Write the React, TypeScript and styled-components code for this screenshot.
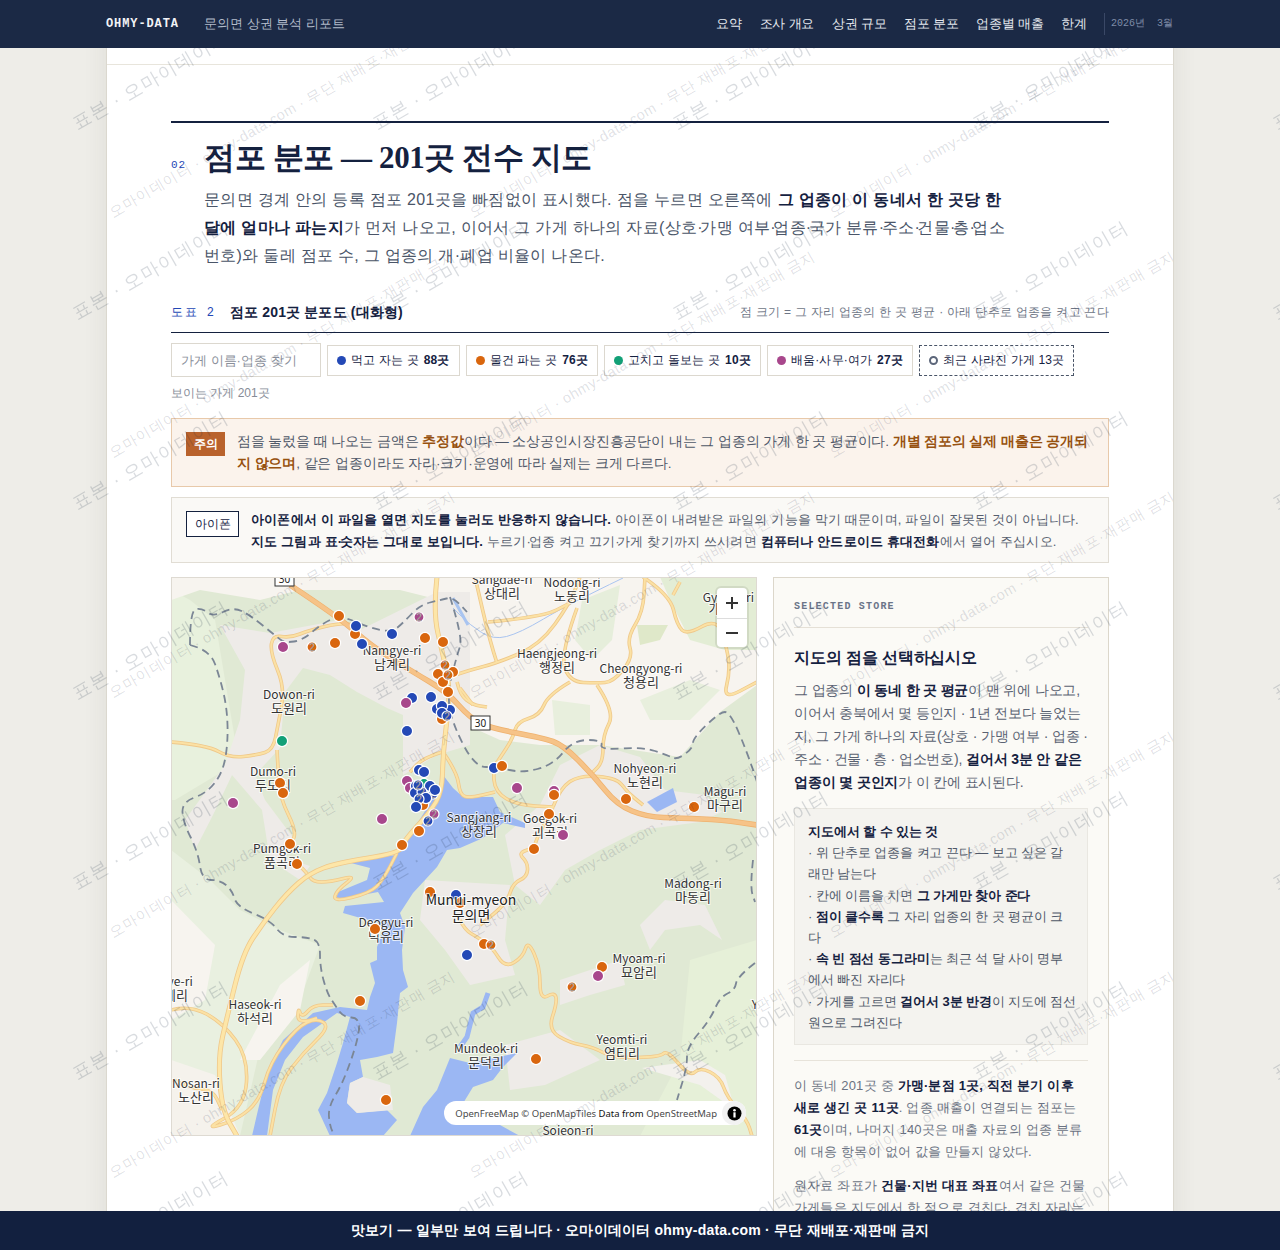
import React from 'react';
import styled, { createGlobalStyle } from 'styled-components';

const SANS = '"Noto Sans CJK KR", "Noto Sans", sans-serif';
const BODY = '"Liberation Sans", sans-serif';
const SERIF = '"Liberation Serif", serif';
const MONO = '"Liberation Mono", monospace';
const NAVY = '#14213f';

const Global = createGlobalStyle`
  html, body { margin: 0; height: 100%; overflow: hidden; background: #eeede8; }
  body { font-family: ${BODY}; color: #4a5568; }
  * { box-sizing: border-box; }
`;

const TopBar = styled.header`
  position: fixed; top: 0; left: 0; right: 0; height: 48px; z-index: 10;
  background: #1b2945; display: flex; align-items: center; padding: 0 107px 0 106px;
`;
const Brand = styled.div`
  font: 700 12px ${MONO}; letter-spacing: .9px; color: #f2f3f6; margin-right: 25px;
`;
const ReportName = styled.div`font-size: 13px; color: #b3bccb;`;
const Nav = styled.nav`margin-left: auto; display: flex; align-items: center; gap: 17.5px;`;
const NavLink = styled.a`font-size: 13px; letter-spacing: -.2px; color: #e6e9f0;`;
const DateTag = styled.div`
  border-left: 1px solid #3a4866; height: 22px; padding-left: 6px;
  font: 400 10px/22px ${MONO}; color: #7f8ca8; white-space: pre;
`;
const BottomBar = styled.footer`
  position: fixed; bottom: 0; left: 0; right: 0; height: 39px; z-index: 10;
  background: #12203f; color: #fff; font-size: 14px; font-weight: 700; letter-spacing: .22px;
  display: flex; align-items: center; justify-content: center;
`;

const Sheet = styled.main`
  position: relative; width: 1066px; height: 100vh; margin: 0 auto; overflow: hidden;
  background: #fff; box-shadow: 0 0 24px rgba(60,55,40,.09), 0 0 0 1px #e3e0d8;
`;
const PrevEnd = styled.div`height: 65px; border-bottom: 1px solid #e8e5dc;`;
const Section = styled.section`padding: 56px 64px 0;`;
const HeadRule = styled.div`height: 2px; background: ${NAVY};`;
const TitleRow = styled.div`display: flex; align-items: baseline; margin-top: 13px;`;
const SecNo = styled.span`
  font: 400 11px ${MONO}; letter-spacing: 1px; color: #2347b5; width: 33px;
`;
const Title = styled.h2`
  margin: 0; font: 700 31px/44px ${SERIF}; color: ${NAVY}; letter-spacing: -.4px;
`;
const Lead = styled.p`
  margin: 6px 0 0 33px; width: 806px; font-size: 16px; line-height: 28px; letter-spacing: .3px; color: #4a5568;
  strong { color: ${NAVY}; font-weight: 700; }
`;
const Mid = styled.span`letter-spacing: -2.3px;`;
const FigHead = styled.div`
  margin-top: 29px; display: flex; align-items: center;
  border-bottom: 1px solid ${NAVY}; padding-bottom: 6px; height: 34px;
`;
const FigNo = styled.span`
  font: 400 12px ${MONO}; letter-spacing: 1.5px; color: #2347b5; width: 59px; white-space: pre;
`;
const FigTitle = styled.span`font-size: 14px; font-weight: 700; letter-spacing: .15px; color: ${NAVY};`;
const FigNote = styled.span`margin-left: auto; font-size: 12px; letter-spacing: .28px; color: #6e7686;`;
const Filters = styled.div`display: flex; align-items: center; gap: 6px; margin-top: 10px;`;
const Search = styled.input`
  width: 150px; height: 34px; border: 1px solid #dcd8cf; background: #fff; padding: 0 9px;
  font: 400 13px ${BODY}; outline: 0;
  &::placeholder { color: #8a8f9a; }
`;
const Chip = styled.button<{ $dashed?: boolean }>`
  height: 31px; padding: 0 9px; background: #fff; display: flex; align-items: center; gap: 5px;
  border: 1px ${p => (p.$dashed ? 'dashed #4a5568' : 'solid #dcd8cf')};
  font: 400 12px ${BODY}; letter-spacing: .15px; color: ${NAVY}; white-space: nowrap;
  b { font-weight: 700; }
`;
const Dot = styled.i<{ $c?: string }>`
  width: 9px; height: 9px; border-radius: 50%;
  ${p => (p.$c ? `background:${p.$c};` : 'border: 2px solid #5c667a;')}
`;
const Count = styled.div`margin-top: 7px; font-size: 12px; line-height: 18px; color: #868c97;`;
const Warn = styled.div`
  margin-top: 16px; height: 69px; padding: 13px 14px; display: flex; gap: 12px;
  background: #fbf3ec; border: 1px solid #e8c9aa;
`;
const WarnBadge = styled.span`
  flex: none; width: 39px; height: 24px; background: #b9622c; color: #fff;
  font-size: 12px; font-weight: 700; text-align: center; line-height: 24px;
`;
const WarnText = styled.p`
  margin: -1px 0 0; font-size: 13.5px; line-height: 22px; letter-spacing: -.1px; color: #4f5868;
  em { font-style: normal; font-weight: 700; color: #97510f; }
`;
const Note = styled.div`
  margin-top: 10px; height: 66px; padding: 13px 14px; display: flex; gap: 12px;
  background: #faf9f6; border: 1px solid #e1ddd4;
`;
const NoteBadge = styled.span`
  flex: none; width: 53px; height: 26px; border: 1px solid ${NAVY}; color: ${NAVY}; background: #fff;
  font-size: 12px; text-align: center; line-height: 24px;
`;
const NoteText = styled.p`
  margin: -2px 0 0; font-size: 13px; line-height: 22px; letter-spacing: .19px; color: #565e6e;
  strong { color: ${NAVY}; font-weight: 700; }
`;
const Columns = styled.div`display: grid; grid-template-columns: 586px 336px; gap: 16px; margin-top: 14px; align-items: start;`;
const MapFrame = styled.div`
  position: relative; height: 559px; overflow: hidden; border: 1px solid #dedad2; background: #e0e9d4;
`;
const MapSvg = styled.svg`position: absolute; left: -1px; top: -1px; width: 586px; height: 559px; display: block;`;
const Zoom = styled.div`
  position: absolute; top: 10px; right: 9px; width: 30px; height: 59px; background: #fff; border-radius: 4px;
  box-shadow: 0 0 0 2px rgba(0,0,0,.08); display: grid; grid-template-rows: 1fr 1fr;
`;
const ZoomBtn = styled.div`
  display: flex; align-items: center; justify-content: center;
  & + & { border-top: 1px solid #ddd; }
`;
const Attrib = styled.div`
  position: absolute; right: 10px; bottom: 10px; height: 24px; padding-left: 11px; border-radius: 12px;
  background: #fff; display: flex; align-items: center; gap: 5px;
  font: 400 9.5px "Noto Sans", sans-serif; color: #4a4a4a;
  b { font-weight: 400; color: #111; }
`;
const InfoBtn = styled.span`
  width: 24px; height: 24px; border-radius: 50%; background: #f2f2f2; display: flex; align-items: center; justify-content: center;
`;
const Aside = styled.aside`
  height: 900px; padding: 20px; background: #fbfaf6; border: 1px solid #dcd7cb; font-size: 14px;
  strong { color: ${NAVY}; font-weight: 700; }
`;
const AsideTag = styled.div`
  font: 700 10px/17px ${MONO}; letter-spacing: 1.2px; color: #6a7488; height: 30px;
  border-bottom: 1px solid #e5e0d6; white-space: pre;
`;
const AsideTitle = styled.h3`margin: 18px 0 0; font-size: 16px; line-height: 24px; letter-spacing: -.15px; font-weight: 700; color: ${NAVY};`;
const AsidePara = styled.p`margin: 9px 0 0; line-height: 23px; letter-spacing: -.18px; color: #5a6272;`;
const Tips = styled.div`
  margin-top: 14px; padding: 12px 14px 11px 13px; background: #f4f3ef; border: 1px solid #e9e7e1; font-size: 13px; line-height: 21.2px; letter-spacing: -.1px; color: #4f5868;
`;
const TipTitle = styled.div`font-weight: 700; color: ${NAVY};`;
const Keep = styled.span`white-space: nowrap;`;
const AsideFoot = styled.div`
  margin-top: 15px; padding-top: 14px; border-top: 1px solid #e7e3da; font-size: 13px; line-height: 22px; letter-spacing: .2px; color: #6a7282;
  p { margin: 0 0 12px; }
`;

const Layer = styled.div<{ $cols: number; $w: number; $h: number }>`
  pointer-events: none; display: grid; z-index: 5; overflow: visible;
  grid-template-columns: repeat(${p => p.$cols}, ${p => p.$w}px); grid-auto-rows: ${p => p.$h}px;
`;
const PageMarks = styled(Layer)`position: fixed; left: -220px; top: -79px;`;
const SheetMarks = styled(Layer)`position: absolute; left: 8px; top: -38px;`;
const BigMark = styled.span`
  height: 24px; width: max-content; line-height: 24px; font-size: 18.5px; letter-spacing: .8px; color: rgba(26,39,68,.17);
  white-space: pre; transform: rotate(-30deg); transform-origin: 0 100%;
`;
const SmallMark = styled.span`
  height: 20px; width: max-content; line-height: 20px; font-size: 14.5px; letter-spacing: .5px; color: rgba(26,39,68,.15);
  white-space: pre; transform: rotate(-30deg); transform-origin: 0 100%;
`;

type P = [number, number];
const smooth = (p: P[]) => {
  let d = `M${p[0][0]} ${p[0][1]}`;
  for (let i = 1; i < p.length - 1; i++) {
    const mx = (p[i][0] + p[i + 1][0]) / 2, my = (p[i][1] + p[i + 1][1]) / 2;
    d += ` Q${p[i][0]} ${p[i][1]} ${mx} ${my}`;
  }
  const l = p[p.length - 1];
  return d + ` L${l[0]} ${l[1]}`;
};

const BLUE = '#2449b6', ORANGE = '#d9660e', GREEN = '#12a077', MAG = '#a8478c';
const WATER = '#9bb7f3';

const minorRoads: P[][] = [
  [[171, 742], [207, 745], [230, 758], [257, 755], [273, 750], [278, 725], [285, 688], [270, 652], [273, 635], [290, 638], [310, 630], [340, 623], [355, 625]],
  [[277, 750], [278, 768], [280, 798], [297, 832], [290, 845]],
  [[297, 863], [307, 873], [313, 882], [330, 882], [357, 875], [337, 890], [333, 902], [370, 893], [383, 880], [397, 853]],
  [[442, 752], [423, 758], [410, 772]],
  [[443, 752], [457, 772], [460, 795], [470, 798], [495, 792]],
  [[455, 675], [470, 670], [497, 663], [540, 645], [570, 603], [580, 577]],
  [[457, 682], [460, 695], [473, 705], [487, 707]],
  [[497, 663], [490, 642], [475, 577]],
  [[488, 622], [543, 617], [570, 603]],
  [[577, 608], [560, 655], [570, 682], [597, 683], [613, 682], [633, 658], [627, 638], [643, 612], [645, 577]],
  [[570, 682], [548, 695], [540, 715], [517, 722], [513, 738], [500, 758], [493, 768], [495, 792], [517, 805], [553, 807]],
  [[597, 685], [615, 712], [603, 735], [603, 762], [592, 773]],
  [[553, 807], [560, 788], [580, 775], [617, 778], [627, 792], [643, 805]],
  [[553, 807], [549, 815], [537, 838], [534, 848], [518, 853], [528, 863], [527, 877], [513, 883], [507, 903], [480, 925]],
  [[460, 920], [465, 930], [477, 937], [492, 947], [505, 968], [523, 957], [528, 940], [540, 967], [540, 1000], [555, 992], [557, 1003], [548, 1030], [570, 1043], [593, 1047], [613, 1058], [660, 1057], [667, 1050], [690, 1077], [700, 1067], [720, 1077], [727, 1097], [747, 1120], [752, 1136]],
  [[643, 577], [670, 595], [677, 625], [687, 635], [717, 618], [727, 648], [730, 672], [723, 700], [757, 682]],
  [[680, 582], [673, 595]],
  [[171, 1010], [190, 1005], [223, 1023], [248, 1057], [245, 1107], [203, 1130], [237, 1120], [260, 1100], [270, 1063], [297, 1027], [317, 1018], [330, 1027], [303, 1053], [280, 1083], [270, 1136]],
  [[317, 1018], [298, 1025], [298, 1007], [302, 1018], [313, 1005], [333, 1005]],
  [[173, 1080], [190, 1088], [213, 1090], [222, 1110]],
  [[460, 688], [473, 705]],
];
const mainRoad: P[] = [[437, 577], [433, 612], [443, 655], [450, 688], [447, 720], [443, 755], [442, 792], [430, 812], [403, 842], [400, 853], [337, 863], [310, 873], [287, 893], [263, 923], [243, 953], [227, 1017], [218, 1057], [222, 1110], [237, 1136]];
const highway: P[] = [[290, 585], [340, 618], [370, 645], [413, 672], [447, 692], [470, 718], [490, 728], [543, 738], [563, 745], [593, 775], [617, 805], [647, 817], [680, 818], [723, 820], [757, 825]];
const borders: P[][] = [
  [[190, 645], [190, 610], [202, 608], [213, 617], [233, 607], [250, 615], [277, 637], [285, 643], [303, 640], [320, 625], [340, 615], [370, 628], [392, 632], [403, 623], [420, 605], [440, 600], [453, 597], [467, 612]],
  [[190, 645], [210, 650], [220, 678], [227, 708], [228, 742], [223, 772], [207, 793], [182, 802], [183, 822], [198, 852], [202, 880], [220, 880], [232, 890], [237, 907], [270, 920], [283, 937], [307, 937], [320, 942], [320, 967], [327, 993], [335, 1005], [343, 1017], [360, 1018], [358, 1040], [343, 1083], [328, 1107], [330, 1127], [335, 1136]],
  [[450, 597], [463, 638], [457, 655], [447, 695], [453, 725], [475, 767], [497, 767], [522, 773], [553, 765], [573, 740], [603, 740], [600, 750], [643, 747], [667, 755], [677, 760], [693, 748], [693, 738], [720, 712], [730, 712], [747, 752], [757, 782]],
  [[755, 963], [737, 977], [735, 990], [720, 997], [710, 1020], [687, 1047], [687, 1067], [677, 1100]],
  [[753, 860], [750, 887], [755, 902]],
];
const labels: [string, string, number, number][] = [
  ['Sangdae-ri', '상대리', 502, 584], ['Nodong-ri', '노동리', 572, 587], ['Namgye-ri', '남계리', 392, 655],
  ['Haengjeong-ri', '행정리', 557, 658], ['Cheongyong-ri', '청용리', 641, 673], ['Dowon-ri', '도원리', 289, 699],
  ['Dumo-ri', '두모리', 273, 776], ['Nohyeon-ri', '노현리', 645, 773], ['Magu-ri', '마구리', 725, 796],
  ['Sangjang-ri', '상장리', 479, 822], ['Goegok-ri', '괴곡리', 550, 823], ['Pumgok-ri', '품곡리', 282, 853],
  ['Madong-ri', '마동리', 693, 888], ['Deogyu-ri', '덕유리', 386, 927], ['Myoam-ri', '묘암리', 639, 963],
  ['Haseok-ri', '하석리', 255, 1009], ['Yeomti-ri', '염티리', 622, 1044], ['Mundeok-ri', '문덕리', 486, 1053],
  ['Nosan-ri', '노산리', 196, 1088], ['Gye-ri', '계리', 176, 986],
];
type M = [number, number, string, number?];
const markers: M[] = [
  [339, 616, ORANGE], [355, 634, ORANGE], [356, 626, BLUE], [392, 634, BLUE], [362, 644, BLUE], [335, 643, ORANGE], [312, 647, ORANGE, 2], [283, 647, MAG], [419, 617, MAG, 2], [425, 638, ORANGE], [443, 642, ORANGE],
  [438, 674, ORANGE], [453, 672, ORANGE], [443, 682, ORANGE], [448, 692, ORANGE], [445, 665, ORANGE, 2], [448, 675, ORANGE, 2], [431, 697, BLUE], [412, 698, BLUE], [406, 703, MAG], [442, 719, ORANGE], [437, 709, BLUE], [450, 710, BLUE], [442, 706, BLUE], [442, 713, BLUE], [447, 716, BLUE, 2], [407, 731, BLUE],
  [407, 781, MAG], [410, 788, MAG], [419, 770, BLUE], [424, 772, BLUE], [423, 805, ORANGE], [424, 784, GREEN], [416, 786, BLUE], [430, 786, BLUE], [415, 793, BLUE], [433, 794, BLUE, 2], [422, 792, BLUE, 2], [418, 785, BLUE, 2], [426, 798, BLUE], [419, 799, BLUE, 2], [435, 790, BLUE], [416, 807, BLUE], [434, 814, MAG, 2], [428, 821, BLUE, 2], [419, 831, ORANGE], [402, 845, ORANGE],
  [282, 741, GREEN], [233, 803, MAG], [382, 819, MAG], [280, 783, ORANGE], [283, 793, ORANGE], [290, 844, ORANGE], [297, 864, ORANGE], [430, 892, ORANGE], [456, 895, BLUE], [460, 903, ORANGE], [375, 929, ORANGE], [467, 955, BLUE], [360, 1001, ORANGE], [386, 1100, ORANGE],
  [484, 944, ORANGE], [491, 945, ORANGE, 2], [602, 967, ORANGE], [598, 976, MAG], [572, 987, ORANGE, 2], [536, 1059, ORANGE],
  [494, 768, BLUE], [502, 766, ORANGE], [517, 788, MAG], [554, 791, MAG], [554, 795, ORANGE], [549, 814, ORANGE], [563, 835, MAG], [534, 849, ORANGE], [626, 799, ORANGE], [694, 807, ORANGE],
];

const roadOut = '#efc88a', roadIn = '#fbe1a4';

const MapArt = () => (
  <MapSvg viewBox="171 577 586 559" aria-label="map">
    <rect x="171" y="577" width="586" height="559" fill="#e0e9d4" />
    <polygon fill="#e8f1dd" points="171,590 190,600 215,620 225,680 235,740 225,770 175,800 171,800" />
    <polygon fill="#e9f0e0" points="171,850 210,880 240,910 280,930 320,945 300,1000 262,1040 240,1136 171,1136" />
    <polygon fill="#e6f0d8" points="690,960 757,940 757,1136 640,1136 680,1060" />
    <polygon fill="#f7f4ef" points="171,577 757,577 757,685 720,712 680,757 600,745 540,745 500,740 460,722 440,690 430,640 440,600 400,590 300,590 260,600 200,590 171,600" />
    <polygon fill="#e3edd5" points="660,577 757,577 757,650 725,650 690,640 670,600" />
    <polygon fill="#e6eedb" points="582,600 620,585 612,640 592,660 575,640" />
    <polygon fill="#dfe8c9" points="637,625 668,625 660,640 640,645" />
    <polygon fill="#e8efdd" points="640,700 690,680 720,690 690,720 650,720" />
    <polygon fill="#e8efdd" points="552,700 590,705 590,735 555,735" />
    <polygon fill="#f7f4ef" points="171,900 215,945 205,1000 171,1020" />
    <polygon fill="#f7f4ef" points="240,1060 280,985 310,960 300,1010 260,1060" />
    <polygon fill="#f5f2ec" points="171,1060 215,1075 240,1136 171,1136" />
    <polygon fill="#eeebe8" points="270,633 340,620 360,630 437,592 470,592 470,745 437,755 403,775 403,715 387,708 357,692 330,675 303,668 285,692 280,748 255,775 265,800 295,840 285,858 310,866 300,880 270,860 262,810 232,775 213,815 195,850 185,820 225,765 240,720 245,670 220,625" />
    <polygon fill="#eeebe8" points="560,765 600,745 640,757 665,790 705,795 722,812 700,822 640,830 600,850 565,870 540,905 515,885 505,835 540,805" />
    <polygon fill="#eeebe8" points="425,880 510,885 505,940 515,975 470,985 445,950 420,920" />
    <polygon fill="#eeebe8" points="560,980 620,960 625,985 590,995 560,1005" />
    <polygon fill="#eeebe8" points="505,1045 560,1030 600,1060 545,1085 510,1090" />
    <polygon fill="#eeebe8" points="640,925 665,900 705,905 722,940 700,925 665,930 650,950" />
    <polygon fill="#f3f1ed" points="642,1068 700,1060 725,1075 735,1110 700,1085" />
    <polygon fill={WATER} points="443,775 453,788 463,797 493,797 500,812 525,823 525,828 503,823 483,838 460,848 447,850 437,867 413,893 400,913 405,927 402,950 403,970 408,987 400,993 397,1023 393,1053 377,1057 360,1060 363,1077 350,1083 347,1103 357,1113 387,1110 397,1120 383,1136 330,1136 318,1110 327,1093 337,1063 343,1043 350,1017 337,1013 303,1037 285,1060 273,1090 267,1136 252,1136 258,1110 267,1073 283,1040 313,1013 340,1007 367,1010 370,997 375,983 370,963 377,960 377,947 383,930 377,922 357,917 343,913 345,906 384,902 378,892 336,900 338,892 367,880 370,868 347,862 396,855 410,835 427,808 437,792" />
    <polygon fill={WATER} points="410,1136 423,1107 437,1090 450,1058 470,1063 517,1053 503,1067 493,1080 473,1087 462,1105 450,1120 500,1125 520,1136" />
    <polygon fill={WATER} points="647,802 673,788 677,802 657,812" />
    <polygon fill="#eeebe8" points="350,1083 363,1077 390,1085 393,1110 357,1113 347,1103" />
    <polyline fill="none" stroke={WATER} strokeWidth="5" points="488,993 483,1007 473,1013 467,1037 460,1047" />
    <path fill="none" stroke="#a9c4f0" strokeWidth="1" d={smooth([[623, 578], [567, 605], [520, 633], [493, 640], [470, 625], [453, 608]])} />
    <path fill="none" stroke="#a9c4f0" strokeWidth="3" d="M453 598 L468 625" />
    {minorRoads.map((r, i) => <path key={`a${i}`} d={smooth(r)} fill="none" stroke={roadOut} strokeWidth="3.6" strokeLinejoin="round" />)}
    {minorRoads.map((r, i) => <path key={`b${i}`} d={smooth(r)} fill="none" stroke={roadIn} strokeWidth="2" strokeLinejoin="round" />)}
    <path d={smooth(mainRoad)} fill="none" stroke={roadOut} strokeWidth="5" />
    <path d={smooth(mainRoad)} fill="none" stroke="#fde6a8" strokeWidth="3.4" />
    <path d={smooth(highway)} fill="none" stroke="#efb26f" strokeWidth="5.6" />
    <path d={smooth(highway)} fill="none" stroke="#f6c388" strokeWidth="4" />
    {borders.map((b, i) => <path key={`c${i}`} d={smooth(b)} fill="none" stroke="#7b8695" strokeWidth="1.8" strokeDasharray="8 5" />)}
    {[[275, 572], [471, 716]].map(([x, y]) => (
      <g key={x}>
        <rect x={x} y={y} width="19" height="14" fill="#fff" stroke="#333" strokeWidth="1" />
        <text x={x + 9.5} y={y + 11} textAnchor="middle" fontSize="10" fontFamily="Noto Sans" fill="#222">30</text>
      </g>
    ))}
    <g fontFamily={SANS} fontSize="12" textAnchor="middle" fill="#333" stroke="rgba(255,255,255,.75)" strokeWidth="2" style={{ paintOrder: 'stroke' }}>
      {labels.map(([a, b, x, y]) => (
        <g key={a}>
          <text x={x} y={y}>{a}</text>
          <text x={x} y={y + 14} fontSize="13">{b}</text>
        </g>
      ))}
      <text x="710" y="602">Gy</text><text x="750" y="602">ri</text><text x="714" y="614">가</text>
      <text x="755" y="1009">Y</text>
      <text x="568" y="1135">Soieon-ri</text>
    </g>
    {markers.map(([x, y, c, n], i) => (
      <g key={i}>
        <circle cx={x} cy={y} r={n ? 5 : 5.6} fill={c} stroke="#fff" strokeWidth="1.2" />
        {n && <text x={x} y={y + 3.5} textAnchor="middle" fontSize="10" fontFamily='"Liberation Sans"' fill="#e8e4e4" stroke="rgba(90,70,70,.55)" strokeWidth=".5">{n}</text>}
      </g>
    ))}
    <g fontFamily={SANS} fontSize="14" textAnchor="middle" fill="#222" stroke="rgba(255,255,255,.75)" strokeWidth="2" style={{ paintOrder: 'stroke' }}>
      <text x="471" y="905">Munui-myeon</text>
      <text x="471" y="921">문의면</text>
    </g>
  </MapSvg>
);

const nav = ['요약', '조사 개요', '상권 규모', '점포 분포', '업종별 매출', '한계'];
const big = Array.from({ length: 6 * 8 });
const small = Array.from({ length: 3 * 7 });

export default function App() {
  return (
    <>
      <Global />
      <TopBar>
        <Brand>OHMY-DATA</Brand>
        <ReportName>문의면 상권 분석 리포트</ReportName>
        <Nav>
          {nav.map(n => <NavLink key={n}>{n}</NavLink>)}
          <DateTag>2026년  3월</DateTag>
        </Nav>
      </TopBar>
      <Sheet>
        <PrevEnd />
        <Section>
          <HeadRule />
          <TitleRow>
            <SecNo>02</SecNo>
            <Title>점포 분포 — 201곳 전수 지도</Title>
          </TitleRow>
          <Lead>
            문의면 경계 안의 등록 점포 201곳을 빠짐없이 표시했다. 점을 누르면 오른쪽에 <strong>그 업종이 이 동네서 한 곳당 한 달에 얼마나 파는지</strong>가 먼저 나오고, 이어서 그 가게 하나의 자료(상호<Mid>·</Mid>가맹 여부<Mid>·</Mid>업종<Mid>·</Mid>국가 분류<Mid>·</Mid>주소<Mid>·</Mid>건물<Mid>·</Mid>층<Mid>·</Mid>업소번호)와 둘레 점포 수, 그 업종의 개·폐업 비율이 나온다.
          </Lead>
          <FigHead>
            <FigNo>도표 2</FigNo>
            <FigTitle>점포 201곳 분포도 (대화형)</FigTitle>
            <FigNote>점 크기 = 그 자리 업종의 한 곳 평균 · 아래 단추로 업종을 켜고 끈다</FigNote>
          </FigHead>
          <Filters>
            <Search placeholder="가게 이름·업종 찾기" />
            <Chip><Dot $c={BLUE} />먹고 자는 곳 <b>88곳</b></Chip>
            <Chip><Dot $c={ORANGE} />물건 파는 곳 <b>76곳</b></Chip>
            <Chip><Dot $c={GREEN} />고치고 돌보는 곳 <b>10곳</b></Chip>
            <Chip><Dot $c={MAG} />배움·사무·여가 <b>27곳</b></Chip>
            <Chip $dashed><Dot />최근 사라진 가게 13곳</Chip>
          </Filters>
          <Count>보이는 가게 201곳</Count>
          <Warn>
            <WarnBadge>주의</WarnBadge>
            <WarnText>점을 눌렀을 때 나오는 금액은 <em>추정값</em>이다 — 소상공인시장진흥공단이 내는 그 업종의 가게 한 곳 평균이다. <em>개별 점포의 실제 매출은 공개되지 않으며</em>, 같은 업종이라도 자리·크기·운영에 따라 실제는 크게 다르다.</WarnText>
          </Warn>
          <Note>
            <NoteBadge>아이폰</NoteBadge>
            <NoteText><strong>아이폰에서 이 파일을 열면 지도를 눌러도 반응하지 않습니다.</strong> 아이폰이 내려받은 파일의 기능을 막기 때문이며, 파일이 잘못된 것이 아닙니다.<br /><strong>지도 그림과 표<Mid>·</Mid>숫자는 그대로 보입니다.</strong> 누르기<Mid>·</Mid>업종 켜고 끄기<Mid>·</Mid>가게 찾기까지 쓰시려면 <strong>컴퓨터나 안드로이드 휴대전화</strong>에서 열어 주십시오.</NoteText>
          </Note>
          <Columns>
            <MapFrame>
              <MapArt />
              <Zoom>
                <ZoomBtn>
                  <svg width="12" height="12" viewBox="0 0 12 12"><path d="M5 0h2v5h5v2H7v5H5V7H0V5h5z" fill="#333" /></svg>
                </ZoomBtn>
                <ZoomBtn>
                  <svg width="12" height="12" viewBox="0 0 12 12"><path d="M0 5h12v2H0z" fill="#333" /></svg>
                </ZoomBtn>
              </Zoom>
              <Attrib>
                <span>OpenFreeMap © OpenMapTiles <b>Data from</b> OpenStreetMap</span>
                <InfoBtn>
                  <svg width="15" height="15" viewBox="0 0 15 15"><circle cx="7.5" cy="7.5" r="7" fill="#000" /><rect x="6.4" y="6.3" width="2.2" height="5.2" fill="#fff" /><circle cx="7.5" cy="4.2" r="1.3" fill="#fff" /></svg>
                </InfoBtn>
              </Attrib>
            </MapFrame>
            <Aside>
              <AsideTag>SELECTED STORE</AsideTag>
              <AsideTitle>지도의 점을 선택하십시오</AsideTitle>
              <AsidePara>
                그 업종의 <strong>이 동네 한 곳 평균</strong>이 맨 위에 나오고, 이어서 충북에서 몇 등인지 · 1년 전보다 늘었는지, 그 가게 하나의 자료(상호 · 가맹 여부 · 업종 · 주소 · 건물 · 층 · 업소번호), <strong>걸어서 3분 안 같은 업종이 몇 곳인지</strong>가 이 칸에 표시된다.
              </AsidePara>
              <Tips>
                <TipTitle>지도에서 할 수 있는 것</TipTitle>
                · 위 단추로 업종을 켜고 끈다 — 보고 싶은 갈래만 남는다<br />
                · 칸에 이름을 치면 <strong>그 가게만 찾아 준다</strong><br />
                · <strong>점이 클수록</strong> 그 자리 업종의 한 곳 평균이 크다<br />
                · <strong>속 빈 점선 동그라미</strong>는 최근 석 달 사이 명부에서 빠진 자리다<br />
                <Keep>· 가게를 고르면 <strong>걸어서 3분 반경</strong>이 지도에 점선</Keep> 원으로 그려진다
              </Tips>
              <AsideFoot>
                <p>이 동네 201곳 중 <strong>가맹·분점 1곳, 직전 분기 이후 새로 생긴 곳 11곳</strong>. 업종 매출이 연결되는 점포는 <strong>61곳</strong>이며, 나머지 140곳은 매출 자료의 업종 분류에 대응 항목이 없어 값을 만들지 않았다.</p>
                <p>원자료 좌표가 <strong>건물·지번 대표 좌표</strong>여서 같은 건물 가게들은 지도에서 한 점으로 겹친다. 겹친 자리는 숫자로 표시한다.</p>
              </AsideFoot>
            </Aside>
          </Columns>
        </Section>
        <SheetMarks $cols={3} $w={360} $h={240}>
          {small.map((_, i) => <SmallMark key={i}>오마이데이터 · ohmy-data.com · 무단 재배포·재판매 금지</SmallMark>)}
        </SheetMarks>
      </Sheet>
      <PageMarks $cols={6} $w={300} $h={190}>
        {big.map((_, i) => <BigMark key={i}>표본 · 오마이데이터</BigMark>)}
      </PageMarks>
      <BottomBar>맛보기 — 일부만 보여 드립니다 · 오마이데이터 ohmy-data.com · 무단 재배포·재판매 금지</BottomBar>
    </>
  );
}
